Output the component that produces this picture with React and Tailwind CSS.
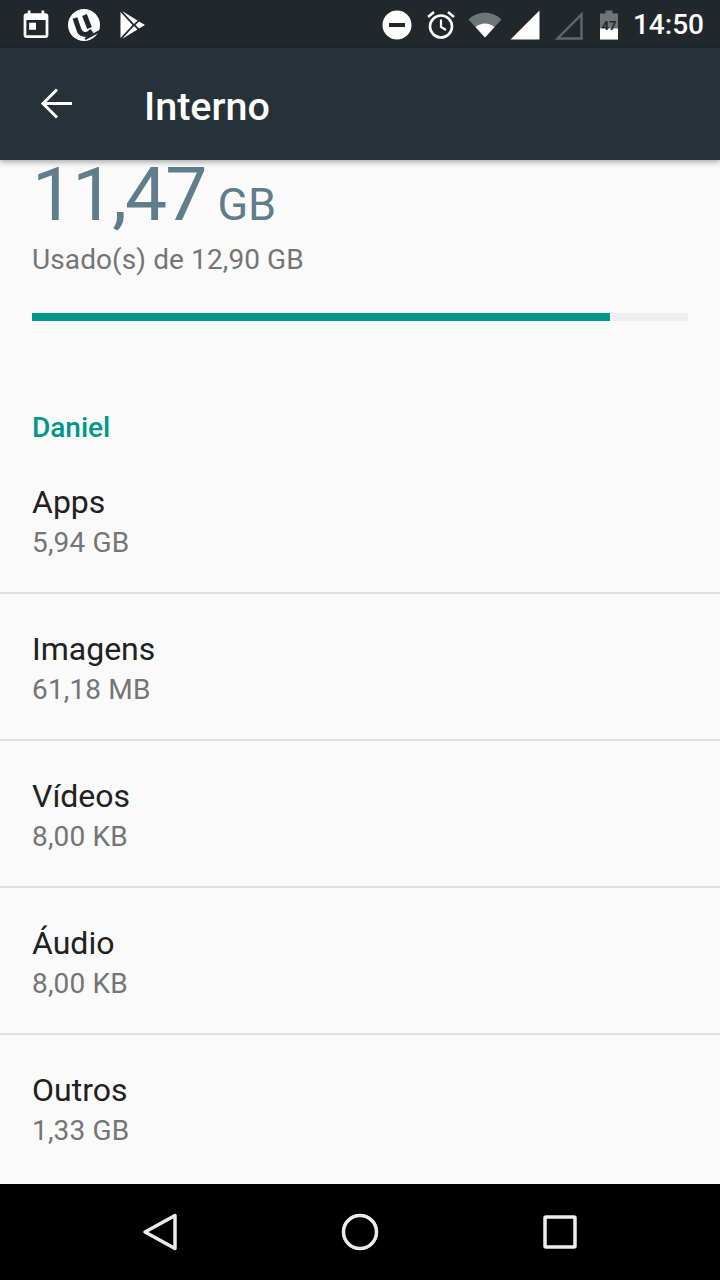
import React from "react";

const rows = [
  ["Apps", "5,94 GB"],
  ["Imagens", "61,18 MB"],
  ["Vídeos", "8,00 KB"],
  ["Áudio", "8,00 KB"],
  ["Outros", "1,33 GB"],
];

function StatusLeft() {
  return (
    <div className="flex items-center">
      <svg width="34" height="33" viewBox="0 0 24 24" fill="#fff" className="ml-[19px]">
        <path d="M16 1v2H8V1H6v2H5c-1.11 0-1.99.9-1.99 2L3 19c0 1.1.89 2 2 2h14c1.1 0 2-.9 2-2V5c0-1.1-.9-2-2-2h-1V1h-2zm3 18H5V8h14v11zM7 10h5v5H7z" />
      </svg>
      <svg width="32" height="32" viewBox="0 0 32 32" className="ml-[15px]">
        <circle cx="16" cy="16" r="16" fill="#fff" />
        <path d="M7 9l4 12c1.500 4 6 5.500 10 3.500l3-2.500M16.500 6l5 13" fill="none" stroke="#21272b" strokeWidth="5" />
        <path d="M17 30l15-8" stroke="#21272b" strokeWidth="2" />
      </svg>
      <svg width="26" height="28" viewBox="0 0 26 28" className="ml-[20px]">
        <g fill="#fff">
          <path d="M0.500 1L12.500 14 0.500 27z" />
          <path d="M2 0L17.500 9.500 14 13z" />
          <path d="M2 28L17.500 18.500 14 15z" />
          <path d="M19 10.500L25 14 19 17.500 15.500 14z" />
        </g>
      </svg>
    </div>
  );
}

function StatusRight() {
  return (
    <div className="flex items-center">
      <svg width="30" height="30" viewBox="0 0 30 30">
        <circle cx="15" cy="15" r="14.500" fill="#fff" />
        <rect x="7" y="13" width="16" height="4" fill="#21272b" />
      </svg>
      <svg width="30" height="30" viewBox="0 0 30 30" fill="none" stroke="#fff" className="ml-[14px]">
        <circle cx="15" cy="16.500" r="11" strokeWidth="2.600" />
        <path d="M15 9.500v7.500l5 3" strokeWidth="2.200" />
        <path d="M2 7l6-5M28 7l-6-5" strokeWidth="2.600" />
      </svg>
      <svg width="34" height="26" viewBox="0 0 34 26" className="ml-[12px]">
        <path d="M0.500 7.500C9-1.500 25-1.500 33.500 7.500L17 25.500z" fill="#6f7477" />
        <path d="M7.500 15c5.500-4.800 13.500-4.800 19 0L17 25.500z" fill="#fff" />
      </svg>
      <svg width="30" height="30" viewBox="0 0 30 30" className="ml-[8px]">
        <path d="M0.500 29.500L29.500 0.500v29z" fill="#fff" />
      </svg>
      <svg width="30" height="30" viewBox="0 0 30 30" className="ml-[14px]">
        <path d="M3.500 28.500L27.500 4.500v24z" fill="none" stroke="#62676a" strokeWidth="2.400" />
      </svg>
      <div className="relative ml-[16px] w-[18px] h-[30px]">
        <svg width="18" height="30" viewBox="0 0 18 30" className="absolute inset-0">
          <path d="M5.500 0.500h7v3h5.500v26H0v-26h5.500z" fill="#6f7477" />
          <path d="M0 18.500h18v11H0z" fill="#fff" />
        </svg>
        <span className="absolute inset-x-0 top-[8px] text-center text-[13px] leading-[15px] font-bold text-[#21272b]">47</span>
      </div>
      <span className="ml-[15px] mr-[16px] text-[28px] leading-[34px] text-white font-medium">14:50</span>
    </div>
  );
}

export default function App() {
  return (
    <div className="w-[720px] h-[1280px] flex flex-col overflow-hidden bg-[#fafafa] font-['Roboto',sans-serif]">
      <div className="h-[48px] shrink-0 bg-[#21272b] flex items-center justify-between pt-[2px]">
        <StatusLeft />
        <StatusRight />
      </div>
      <header className="relative z-10 h-[112px] shrink-0 bg-[#263238] flex items-center shadow-[0_2px_6px_rgba(0,0,0,0.35)]">
        <svg width="48" height="48" viewBox="0 0 48 48" className="ml-[32px]" fill="none" stroke="#fff" strokeWidth="3">
          <path d="M40 23.500H11M25 9.500L11 23.500l14 14" />
        </svg>
        <h1 className="ml-[64px] pt-[5px] text-[39.5px] leading-[48px] font-medium text-white">Interno</h1>
      </header>
      <main className="flex-1 min-h-0 overflow-hidden">
        <div className="px-[32px]">
          <div className="flex items-baseline h-[68px] text-[#607d8b]">
            <span className="text-[75px] leading-[68px] tracking-[-2px]">11,47</span>
            <span className="ml-[12px] text-[45px] leading-[68px]">GB</span>
          </div>
          <div className="mt-[12px] text-[28px] leading-[40px] tracking-[0.100px] text-[#757575]">Usado(s) de 12,90 GB</div>
          <div className="mt-[33px] h-[8px] bg-[#eeeeee]">
            <div className="h-full bg-[#009688]" style={{ width: `${(578 / 656) * 100}%` }} />
          </div>
          <div className="mt-[87px] text-[28px] leading-[40px] font-medium text-[#009688]">Daniel</div>
        </div>
        <ul className="-mt-px">
          {rows.map(([t, s], i) => (
            <li key={t} className={`h-[147px] px-[32px] ${i < rows.length - 1 ? "border-b-2 border-[#e0e0e0]" : ""}`}>
              <div className="pt-[35px] text-[32px] leading-[40px] text-[#212121]">{t}</div>
              <div className="pt-px text-[28px] leading-[40px] tracking-[0.150px] text-[#757575]">{s}</div>
            </li>
          ))}
        </ul>
      </main>
      <nav className="h-[96px] shrink-0 bg-black flex items-center justify-center">
        <div className="w-[200px] flex justify-center">
          <svg width="40" height="40" viewBox="0 0 40 40" fill="none" stroke="#ececec" strokeWidth="3.500" strokeLinejoin="round">
            <path d="M35 3.500v33L5 20z" />
          </svg>
        </div>
        <div className="w-[200px] flex justify-center">
          <svg width="40" height="40" viewBox="0 0 40 40" fill="none" stroke="#ececec" strokeWidth="3.500">
            <circle cx="20" cy="20" r="16.500" />
          </svg>
        </div>
        <div className="w-[200px] flex justify-center">
          <svg width="40" height="40" viewBox="0 0 40 40" fill="none" stroke="#ececec" strokeWidth="3.500" strokeLinejoin="round">
            <rect x="5" y="5" width="30" height="30" rx="1" />
          </svg>
        </div>
      </nav>
    </div>
  );
}
